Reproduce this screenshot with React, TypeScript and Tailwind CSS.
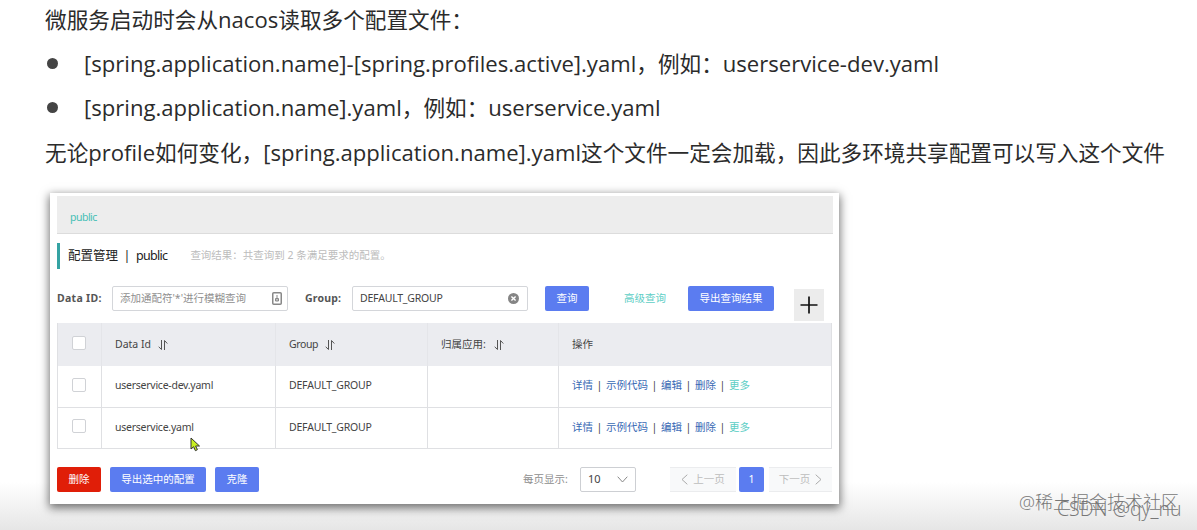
import { Fragment, type ReactNode } from "react";
import clsx from "clsx";

const actions = ["详情", "示例代码", "编辑", "删除"];

const rows = [
  { id: "userservice-dev.yaml", group: "DEFAULT_GROUP" },
  { id: "userservice.yaml", group: "DEFAULT_GROUP" },
];

const columns = "grid grid-cols-[43px_174px_152px_131px_1fr]";

function Button({ children, className }: { children: ReactNode; className?: string }) {
  return (
    <button
      className={clsx(
        "flex h-[25px] shrink-0 items-center justify-center rounded-[2px] text-[10.5px] text-white",
        className,
      )}
    >
      {children}
    </button>
  );
}

function SortIcon() {
  return (
    <svg width="10" height="12" viewBox="0 0 10 12" fill="none" stroke="#555" strokeWidth="1">
      <path d="M3.5 1v9.5L0.7 7.8M6.5 11V1.5l2.8 3" />
    </svg>
  );
}

function Checkbox() {
  return <span className="block h-[14px] w-[14px] rounded-[2px] border border-[#d0d2d6] bg-white" />;
}

function Latin({ children }: { children: ReactNode }) {
  return <span className="text-[22.1px]">{children}</span>;
}

function Notes() {
  return (
    <div className="grid auto-rows-[44.2px] pl-[45px] text-[21.63px] leading-[44.2px] whitespace-nowrap text-[#2b2b2b]">
      <p>
        微服务启动时会从<Latin>nacos</Latin>读取多个配置文件：
      </p>
      <p className="flex items-center">
        <span className="mr-[26px] ml-[2px] h-[11px] w-[11px] rounded-full bg-[#444]" />
        <span>
          <Latin>[spring.application.name]-[spring.profiles.active].yaml</Latin>，例如：
          <Latin>userservice-dev.yaml</Latin>
        </span>
      </p>
      <p className="flex items-center">
        <span className="mr-[26px] ml-[2px] h-[11px] w-[11px] rounded-full bg-[#444]" />
        <span>
          <Latin>[spring.application.name].yaml</Latin>，例如：<Latin>userservice.yaml</Latin>
        </span>
      </p>
      <p>
        无论<Latin>profile</Latin>如何变化，<Latin>[spring.application.name].yaml</Latin>
        这个文件一定会加载，因此多环境共享配置可以写入这个文件
      </p>
    </div>
  );
}

function SearchBar() {
  return (
    <div className="flex h-[37px] items-start">
      <label className="mt-[4px] w-[55px] text-[10.5px] leading-4 font-bold tracking-[0.3px] whitespace-nowrap text-[#555]">
        Data ID:
      </label>
      <div className="flex h-[25px] w-[176px] items-center justify-between rounded-[2px] border border-[#d4d6da] pr-[5px] pl-[7px] text-[10.5px] text-[#8f8f8f]">
        <span>添加通配符'*'进行模糊查询</span>
        <svg width="10" height="13" viewBox="0 0 10 13" fill="none" stroke="#888">
          <rect x="0.75" y="0.75" width="8.5" height="11.5" rx="1" strokeWidth="1.5" />
          <path d="M5 3v3M3.5 9V6.5h3V9zM5 7v2" />
        </svg>
      </div>
      <label className="mt-[4px] ml-[17px] w-[47px] text-[10.5px] leading-4 font-bold tracking-[0.2px] whitespace-nowrap text-[#555]">
        Group:
      </label>
      <div className="flex h-[25px] w-[176px] items-center justify-between rounded-[2px] border border-[#d4d6da] pr-[8px] pl-[7px] text-[10.5px] text-[#444]">
        <span className="tracking-[-0.2px]">DEFAULT_GROUP</span>
        <svg width="11" height="11" viewBox="0 0 11 11">
          <circle cx="5.5" cy="5.5" r="5.5" fill="#858585" />
          <path d="M3.4 3.4l4.2 4.2M7.6 3.4L3.4 7.6" stroke="#fff" strokeWidth="1.4" />
        </svg>
      </div>
      <Button className="ml-[17px] w-[44px] bg-[#5b7cf0]">查询</Button>
      <a className="mt-[4px] ml-[35px] text-[10.5px] leading-4 text-[#5dcec5]">高级查询</a>
      <Button className="ml-[22px] w-[86px] bg-[#5b7cf0]">导出查询结果</Button>
      <button className="mt-[3px] ml-[20px] flex h-8 w-[30px] items-center justify-center bg-[#ececec]">
        <svg width="18" height="18" viewBox="0 0 18 18" stroke="#111" strokeWidth="1.7">
          <path d="M9 0.5v17M0.5 9h17" />
        </svg>
      </button>
    </div>
  );
}

function ConfigTable() {
  return (
    <div className="w-[775px] border border-t-0 border-[#dfe0e3] text-[10.5px] text-[#444]">
      <div className={clsx(columns, "h-[43px] bg-[#ebecf0]")}>
        <div className="flex items-center pb-[3px] pl-[14px]">
          <Checkbox />
        </div>
        <div className="flex items-center gap-[7px] border-l border-[#e4e5e9] pl-[13px]">
          Data Id <SortIcon />
        </div>
        <div className="flex items-center gap-[7px] border-l border-[#e4e5e9] pl-[13px]">
          <span className="tracking-[-0.4px]">Group</span> <SortIcon />
        </div>
        <div className="flex items-center gap-[8px] border-l border-[#e4e5e9] pl-[13px]">
          归属应用: <SortIcon />
        </div>
        <div className="flex items-center border-l border-[#e4e5e9] pl-[13px]">操作</div>
      </div>
      {rows.map((row, i) => (
        <div key={row.id} className={clsx(columns, "h-[41px]", i > 0 && "border-t border-[#dfe0e3]")}>
          <div className="flex items-center pb-[4px] pl-[14px]">
            <Checkbox />
          </div>
          <div className="flex items-center border-l border-[#dfe0e3] pb-px pl-[13px] tracking-[-0.25px]">{row.id}</div>
          <div className="flex items-center border-l border-[#dfe0e3] pb-px pl-[13px] tracking-[-0.2px]">{row.group}</div>
          <div className="border-l border-[#dfe0e3]" />
          <div className="flex items-center border-l border-[#dfe0e3] pb-px pl-[13px] text-[#3768b4]">
            {actions.map((action) => (
              <Fragment key={action}>
                <span>{action}</span>
                <span className="w-[13px] text-center text-[#444]">|</span>
              </Fragment>
            ))}
            <span className="text-[#5dcec5]">更多</span>
          </div>
        </div>
      ))}
    </div>
  );
}

function Footer() {
  return (
    <div className="mt-[18px] flex items-center text-[10.5px]">
      <Button className="w-[44px] bg-[#e01e08]">删除</Button>
      <Button className="ml-[9px] w-[96px] bg-[#5b7cf0]">导出选中的配置</Button>
      <Button className="ml-[9px] w-[44px] bg-[#5b7cf0]">克隆</Button>
      <span className="ml-[264px] w-[57px] text-[#8e8e8e]">每页显示:</span>
      <div className="flex h-[25px] w-[56px] items-center justify-between rounded-[2px] border border-[#cdcfd3] pr-[7px] pl-[7px] text-[11px] text-[#444]">
        10
        <svg width="11" height="7" viewBox="0 0 11 7" fill="none" stroke="#888">
          <path d="M0.7 0.7l4.8 5.3 4.8-5.3" />
        </svg>
      </div>
      <div className="ml-[34px] flex h-[25px] w-[66px] items-center justify-center gap-[5px] border-y border-[#ebecee] bg-[#f8f9fa] text-[#bdbdbd]">
        <svg width="7" height="11" viewBox="0 0 7 11" fill="none" stroke="#aaa">
          <path d="M6.3 0.7L1 5.5l5.3 4.8" />
        </svg>
        上一页
      </div>
      <Button className="ml-[3px] w-[25px] bg-[#5b7cf0]">1</Button>
      <div className="ml-[5px] flex h-[25px] w-[63px] items-center justify-center gap-[5px] border-y border-[#ebecee] bg-[#f8f9fa] text-[#bdbdbd]">
        下一页
        <svg width="7" height="11" viewBox="0 0 7 11" fill="none" stroke="#aaa">
          <path d="M0.7 0.7L6 5.5 0.7 10.3" />
        </svg>
      </div>
    </div>
  );
}

export default function App() {
  return (
    <main
      lang="zh-CN"
      className="relative flex h-[530px] w-[1197px] flex-col overflow-hidden bg-linear-to-b from-white from-[91%] to-[#e6e6e6] font-['Open_Sans','Noto_Sans_CJK_SC',sans-serif]"
    >
      <div className="-mt-[3px] h-[196px] shrink-0">
        <Notes />
      </div>
      <section className="relative ml-[50px] h-[311px] w-[789px] shrink-0 bg-white pt-[3px] pl-[7px] font-['Noto_Sans','Noto_Sans_CJK_SC',sans-serif] whitespace-nowrap shadow-[0_3px_9px_1px_rgba(0,0,0,0.55)]">
        <div className="flex h-[38px] w-[776px] items-center border-b border-[#dcdcdc] bg-[#ededed] pt-[6px] pl-[13px] text-[10.5px] tracking-[-0.5px] text-[#45bfb5]">
          public
        </div>
        <div className="mt-[9px] flex h-[26px] items-center border-l-[3px] border-[#35a3a3] pl-[8px]">
          <h1 className="flex text-[12.5px] text-[#222]">
            配置管理
            <span className="w-[18px] text-center">|</span>
            <span className="tracking-[-0.7px]">public</span>
          </h1>
          <span className="ml-[23px] text-[10.5px] text-[#bcbcbc]">查询结果：共查询到 2 条满足要求的配置。</span>
        </div>
        <div className="mt-[17px]">
          <SearchBar />
        </div>
        <ConfigTable />
        <Footer />
        <svg className="absolute top-[244px] left-[140px]" width="11" height="15" viewBox="0 0 11 15">
          <path d="M1 1v11l2.6-2.3 1.8 4 2-1-1.8-3.7H9.5z" fill="#c8f020" stroke="#333" />
        </svg>
      </section>
      <div className="absolute top-[488px] left-[1019px] text-[18px] leading-7 font-light whitespace-nowrap text-[#777]">
        @稀土掘金技术社区
      </div>
      <div className="absolute top-[495px] left-[1057px] text-[19.5px] leading-7 font-light whitespace-nowrap text-[#777]">
        CSDN @qy_nu
      </div>
    </main>
  );
}
